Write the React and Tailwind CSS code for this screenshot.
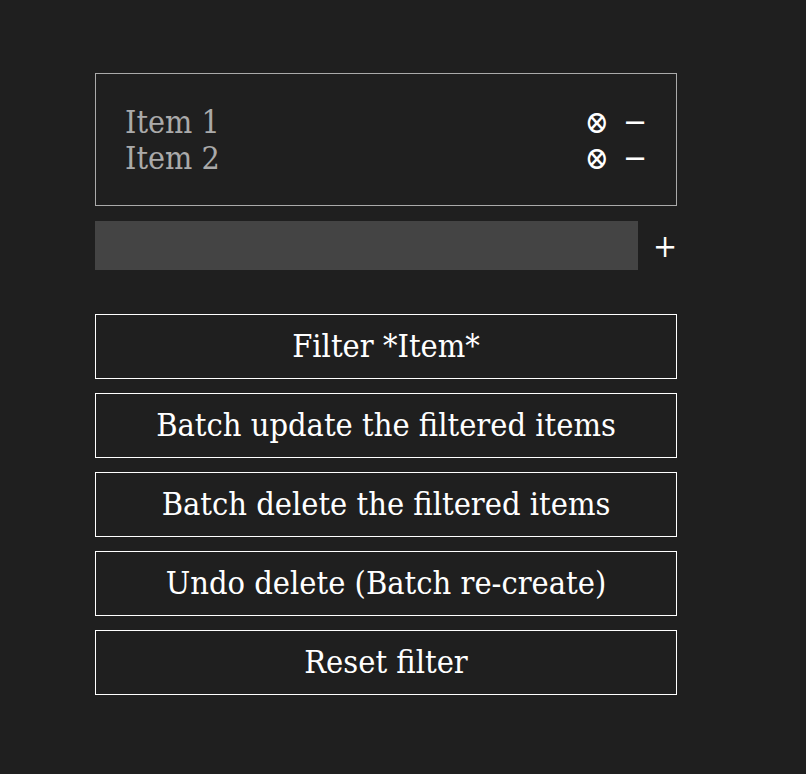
const items = ["Item 1", "Item 2"];
const buttons = [
  "Filter *Item*",
  "Batch update the filtered items",
  "Batch delete the filtered items",
  "Undo delete (Batch re-create)",
  "Reset filter",
];

export default function App() {
  return (
    <div className="min-h-[774px] bg-[#1f1f1f] pl-[95px] pt-[73px] font-['DejaVu_Serif_Condensed','DejaVu_Serif',serif] text-[32px] text-white">
      <div className="w-[582px]">
        <ul className="flex flex-col border border-[#aaaaaa] pb-[29px] pl-[29px] pr-[29px] pt-[30px]">
          {items.map((it) => (
            <li key={it} className="flex h-[36px] items-center justify-between leading-[36px]">
              <span className="text-[#aaaaaa]">{it}</span>
              <span className="flex items-center gap-[14px]">
                <span>⊗</span>
                <span>−</span>
              </span>
            </li>
          ))}
        </ul>
        <div className="mt-[15px] flex items-center justify-between">
          <input className="h-[49px] w-[543px] bg-[#444444] outline-none" />
          <span className="leading-none">+</span>
        </div>
        <div className="mt-[44px] flex flex-col gap-[14px]">
          {buttons.map((b) => (
            <button key={b} className="h-[65px] w-full border border-white pb-[1px] text-center text-[32.3px] leading-none">
              {b}
            </button>
          ))}
        </div>
      </div>
    </div>
  );
}
